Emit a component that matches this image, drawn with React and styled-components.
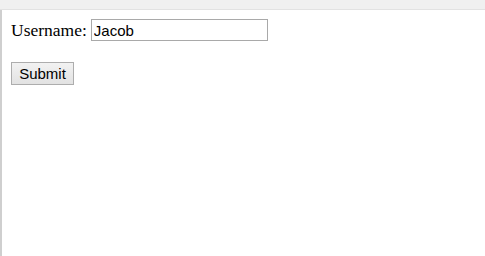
import React from "react";
import { styled, createGlobalStyle } from "styled-components";

const Global = createGlobalStyle`
  html, body {
    margin: 0;
    background: #ffffff;
  }
`;

function App() {
  return (
    <>
      <Global />
      <Page>
        <TopBar />
        <Frame>
          <Form onSubmit={(e) => e.preventDefault()}>
            <Row>
              <Label htmlFor="username">Username:</Label>
              <Input id="username" defaultValue="Jacob" />
            </Row>
            <Button type="submit">Submit</Button>
          </Form>
        </Frame>
      </Page>
    </>
  );
}

const Page = styled.div`
  display: flex;
  flex-direction: column;
  height: 256px;
`;

const TopBar = styled.div`
  height: 9px;
  background-color: #f0f0f0;
  border-bottom: 1px solid #e2e2e2;
  flex-shrink: 0;
`;

const Frame = styled.div`
  flex: 1;
  border-left: 2px solid #cfcfcf;
  padding: 9px 9px;
`;

const Form = styled.form`
  display: flex;
  flex-direction: column;
  align-items: flex-start;
  gap: 21px;
`;

const Row = styled.div`
  display: flex;
  align-items: center;
  gap: 4px;
`;

const Label = styled.label`
  font-family: "Liberation Serif", "Times New Roman", serif;
  font-size: 17.5px;
  color: #000;
`;

const Input = styled.input`
  width: 171px;
  height: 16px;
  padding: 2px 2px;
  border: 1px solid #a9a9a9;
  font-family: "Liberation Sans", Arial, sans-serif;
  font-size: 15px;
  color: #000;
  outline: none;
`;

const Button = styled.button`
  height: 23px;
  width: 63px;
  padding: 0;
  border: 1px solid #adadad;
  background: linear-gradient(#f2f2f2, #e2e2e2);
  font-family: "Liberation Sans", Arial, sans-serif;
  font-size: 15px;
  color: #000;
`;

export default App;
